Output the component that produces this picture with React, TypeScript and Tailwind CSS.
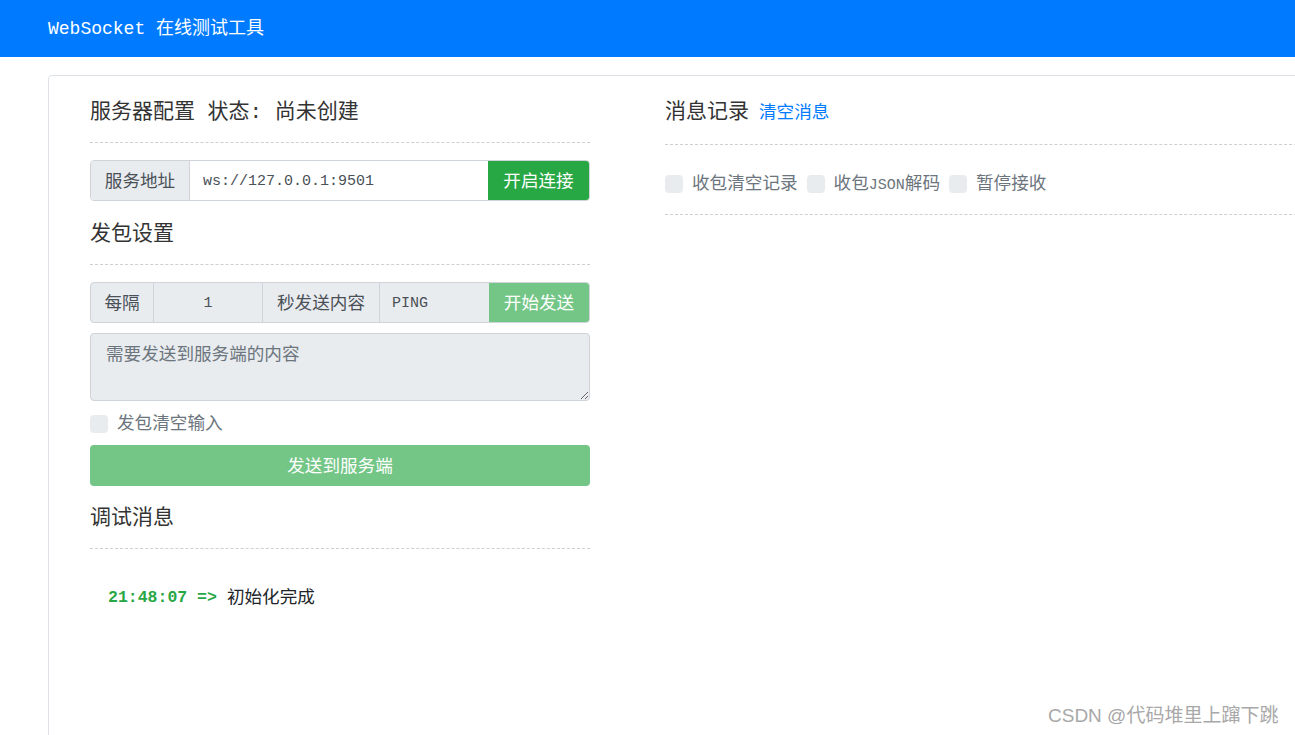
import React from "react";

const FONT = "font-[family-name:'Liberation_Mono','Noto_Sans_CJK_SC',monospace]";

function Box() {
  return <span className="inline-block h-[18px] w-[18px] shrink-0 rounded-[4px] bg-[#e9ecef]" />;
}

function Check({ label }: { label: React.ReactNode }) {
  return (
    <label className="flex items-center gap-[9px] text-[17.6px] text-[#6c757d]">
      <Box />
      <span>{label}</span>
    </label>
  );
}

function Title({ children, className = "" }: { children: React.ReactNode; className?: string }) {
  return (
    <div className={`border-b border-dashed border-[#cfcfcf] ${className}`}>
      <h5 className="text-[21px] leading-[25px] text-[#333]">{children}</h5>
    </div>
  );
}

export default function App() {
  return (
    <div className={`h-[735px] w-full overflow-hidden bg-white ${FONT}`}>
      <header className="flex h-[57px] items-center bg-[#007bff] pl-[48px] pt-[1px] text-[18px] text-white">
        WebSocket 在线测试工具
      </header>

      <div className="relative ml-[48px] mt-[18px] flex h-[720px] w-[1300px] rounded-[4px] border border-[#dee2e6] pl-[41px] pt-[24px]">
        {/* left column */}
        <div className="flex w-[500px] shrink-0 flex-col">
          <Title className="pb-[17px]">服务器配置 状态: 尚未创建</Title>

          <div className="mt-[17px] flex h-[41px] overflow-hidden rounded-[4px] border border-[#ced4da] text-[17.6px]">
            <span className="flex w-[99px] items-center justify-center border-r border-[#ced4da] bg-[#e9ecef] pt-[3px] text-[#495057]">
              服务地址
            </span>
            <input
              className="min-w-0 flex-1 bg-white px-[13px] pt-[3px] text-[15px] text-[#495057] outline-none"
              defaultValue="ws://127.0.0.1:9501"
            />
            <button className="w-[101px] bg-[#28a745] pt-[3px] text-white">开启连接</button>
          </div>

          <Title className="mt-[21px] pb-[17px]">发包设置</Title>

          <div className="mt-[17px] flex h-[41px] overflow-hidden rounded-[4px] border border-[#ced4da] bg-[#e9ecef] text-[17.6px] text-[#495057]">
            <span className="flex w-[63px] items-center justify-center border-r border-[#ced4da] pt-[3px]">每隔</span>
            <span className="flex w-[109px] items-center justify-center border-r border-[#ced4da] pt-[3px] text-[15px]">1</span>
            <span className="flex w-[117px] items-center justify-center border-r border-[#ced4da] pt-[3px]">秒发送内容</span>
            <span className="flex w-[109px] items-center pl-[12px] pt-[3px] text-[15px]">PING</span>
            <button className="flex-1 bg-[#73c686] pt-[3px] text-white">开始发送</button>
          </div>

          <textarea
            className="mt-[10px] h-[68px] w-full rounded-[4px] border border-[#ced4da] bg-[#e9ecef] px-[15px] py-[8px] text-[17.6px] leading-[26px] text-[#495057] outline-none placeholder:text-[#6c757d]"
            placeholder="需要发送到服务端的内容"
          />

          <div className="mt-[10px] flex h-[26px] items-center">
            <Check label="发包清空输入" />
          </div>

          <button className="mt-[8px] h-[41px] w-full rounded-[4px] bg-[#73c686] pt-[3px] text-[17.6px] text-white">
            发送到服务端
          </button>

          <Title className="mt-[20px] pb-[17px]">调试消息</Title>

          <div className="mt-[36px] flex items-center pl-[18px] text-[17.6px] leading-[26px]">
            <span className="text-[16.5px] font-bold text-[#28a745]">21:48:07 =&gt;</span>
            <span className="ml-[10px] text-[#212529]">初始化完成</span>
          </div>
        </div>

        {/* right column */}
        <div className="ml-[75px] flex flex-1 flex-col">
          <div className="flex items-end border-b border-dashed border-[#cfcfcf] pb-[19px]">
            <h5 className="text-[21px] leading-[25px] text-[#333]">消息记录</h5>
            <a className="ml-[10px] text-[17.6px] leading-[24px] text-[#007bff]">清空消息</a>
          </div>
          <div className="flex h-[70px] items-center gap-[9px] border-b border-dashed border-[#cfcfcf] pt-[9px]">
            <Check label="收包清空记录" />
            <Check
              label={
                <>
                  收包<span className="text-[15px]">JSON</span>解码
                </>
              }
            />
            <Check label="暂停接收" />
          </div>
        </div>
      </div>

      <div className="absolute left-[1048px] top-[703px] font-[family-name:'Liberation_Sans','Noto_Sans_CJK_SC',sans-serif] text-[19px] leading-[26px] text-[#a8a8a8]">
        CSDN @代码堆里上蹿下跳
      </div>
    </div>
  );
}
